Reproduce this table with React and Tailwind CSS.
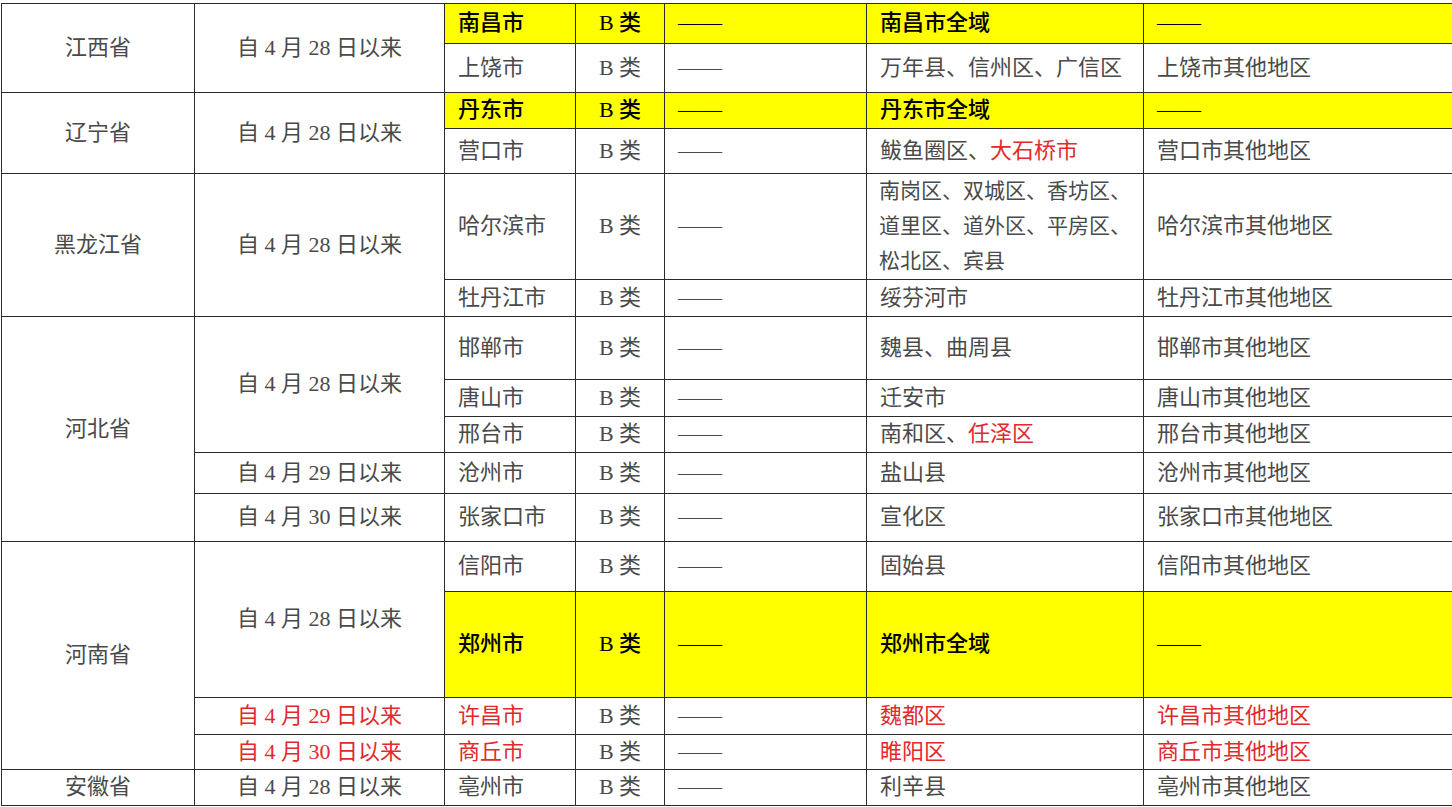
import React from 'react';

const font = { fontFamily: '"Liberation Serif", "Noto Sans CJK SC", serif' };

const R = ({ children }) => <span className="text-[#e3292b]">{children}</span>;

const Cell = ({ children, center, yellow, red, rowSpan, className = '' }) => (
  <td
    rowSpan={rowSpan}
    className={
      'border border-[#2b2b2b] align-middle whitespace-nowrap ' +
      (center ? 'text-center ' : 'text-left pl-[13px] ') +
      (yellow ? 'bg-[#ffff00] text-black font-medium ' : red ? 'text-[#e3292b] ' : 'text-[#4a4a4a] ') +
      className
    }
  >
    {children}
  </td>
);

const Date = ({ d, red, rowSpan }) => (
  <Cell center red={red} rowSpan={rowSpan}>
    自 4 月 {d} 日以来
  </Cell>
);

const City = ({ city, area, other, yellow, red }) => (
  <>
    <Cell yellow={yellow} red={red}>{city}</Cell>
    <Cell center yellow={yellow}>B 类</Cell>
    <Cell yellow={yellow}>——</Cell>
    <Cell yellow={yellow} red={red}>{area}</Cell>
    <Cell yellow={yellow} red={red}>{other}</Cell>
  </>
);

export default function App() {
  return (
    <div className="w-[1452px] h-[807px] overflow-hidden bg-white pt-[3px] pl-px" style={font}>
      <table className="border-collapse table-fixed w-[1480px] text-[22px] leading-[1.2]">
        <colgroup>
          <col className="w-[193px]" />
          <col className="w-[250px]" />
          <col className="w-[131px]" />
          <col className="w-[89px]" />
          <col className="w-[202px]" />
          <col className="w-[277px]" />
          <col />
        </colgroup>
        <tbody>
          <tr className="h-[40px]">
            <Cell center rowSpan={2}>江西省</Cell>
            <Date d="28" rowSpan={2} />
            <City yellow city="南昌市" area="南昌市全域" other="——" />
          </tr>
          <tr className="h-[49px]">
            <City city="上饶市" area="万年县、信州区、广信区" other="上饶市其他地区" />
          </tr>
          <tr className="h-[36px]">
            <Cell center rowSpan={2}>辽宁省</Cell>
            <Date d="28" rowSpan={2} />
            <City yellow city="丹东市" area="丹东市全域" other="——" />
          </tr>
          <tr className="h-[45px]">
            <City city="营口市" area={<>鲅鱼圈区、<R>大石桥市</R></>} other="营口市其他地区" />
          </tr>
          <tr className="h-[105px]">
            <Cell center rowSpan={2}>黑龙江省</Cell>
            <Date d="28" rowSpan={2} />
            <City
              city="哈尔滨市"
              area={
                <div className="text-[21px] leading-[35px] -ml-px">
                  南岗区、双城区、香坊区、
                  <br />
                  道里区、道外区、平房区、
                  <br />
                  松北区、宾县
                </div>
              }
              other="哈尔滨市其他地区"
            />
          </tr>
          <tr className="h-[37px]">
            <City city="牡丹江市" area="绥芬河市" other="牡丹江市其他地区" />
          </tr>
          <tr className="h-[63px]">
            <Cell center rowSpan={5}>河北省</Cell>
            <Date d="28" rowSpan={3} />
            <City city="邯郸市" area="魏县、曲周县" other="邯郸市其他地区" />
          </tr>
          <tr className="h-[37px]">
            <City city="唐山市" area="迁安市" other="唐山市其他地区" />
          </tr>
          <tr className="h-[36px]">
            <City city="邢台市" area={<>南和区、<R>任泽区</R></>} other="邢台市其他地区" />
          </tr>
          <tr className="h-[41px]">
            <Date d="29" />
            <City city="沧州市" area="盐山县" other="沧州市其他地区" />
          </tr>
          <tr className="h-[48px]">
            <Date d="30" />
            <City city="张家口市" area="宣化区" other="张家口市其他地区" />
          </tr>
          <tr className="h-[50px]">
            <Cell center rowSpan={4}>河南省</Cell>
            <Date d="28" rowSpan={2} />
            <City city="信阳市" area="固始县" other="信阳市其他地区" />
          </tr>
          <tr className="h-[106px]">
            <City yellow city="郑州市" area="郑州市全域" other="——" />
          </tr>
          <tr className="h-[37px]">
            <Date d="29" red />
            <City red city="许昌市" area="魏都区" other="许昌市其他地区" />
          </tr>
          <tr className="h-[35px]">
            <Date d="30" red />
            <City red city="商丘市" area="睢阳区" other="商丘市其他地区" />
          </tr>
          <tr className="h-[36px]">
            <Cell center>安徽省</Cell>
            <Date d="28" />
            <City city="亳州市" area="利辛县" other="亳州市其他地区" />
          </tr>
        </tbody>
      </table>
    </div>
  );
}
